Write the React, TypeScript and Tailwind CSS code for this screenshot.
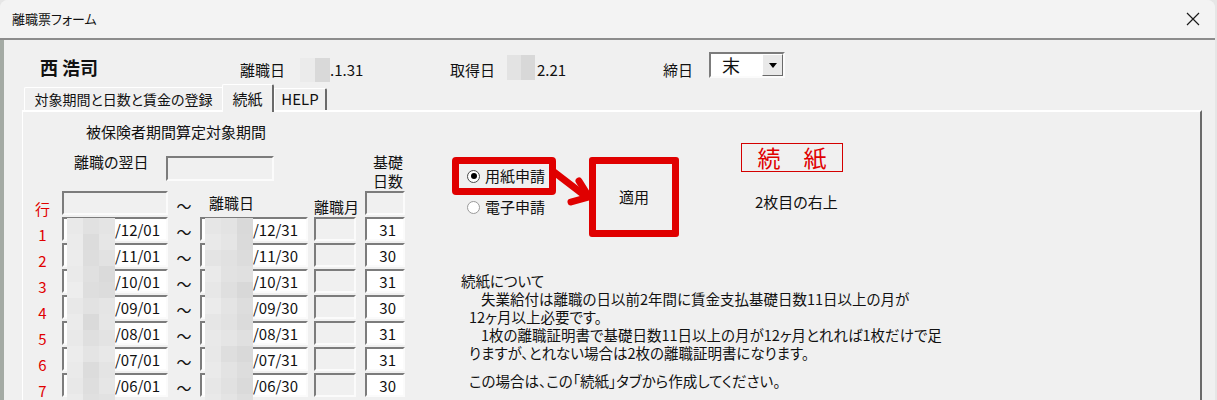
import React from "react";

// 3D sunken edit box, like the classic Windows forms control
const sunken =
  "border-2 border-t-[#7c7c7c] border-l-[#7c7c7c] border-r-[#fbfbfb] border-b-[#fbfbfb]";

const rows = [
  { no: "1", from: "/12/01", to: "/12/31", days: "31" },
  { no: "2", from: "/11/01", to: "/11/30", days: "30" },
  { no: "3", from: "/10/01", to: "/10/31", days: "31" },
  { no: "4", from: "/09/01", to: "/09/30", days: "30" },
  { no: "5", from: "/08/01", to: "/08/31", days: "31" },
  { no: "6", from: "/07/01", to: "/07/31", days: "31" },
  { no: "7", from: "/06/01", to: "/06/30", days: "30" },
];

// pixelated cover over the year part of the dates
const mosaicFrom = [
  "bg-[#e9e9e9]", "bg-[#e1e1e1]", "bg-[#e4e4e4]",
  "bg-[#ebebeb]", "bg-[#dcdcdc]", "bg-[#e6e6e6]",
  "bg-[#ececec]", "bg-[#dddddd]", "bg-[#e2e2e2]",
  "bg-[#eaeaea]", "bg-[#e0e0e0]", "bg-[#dadada]",
  "bg-[#ededed]", "bg-[#dedede]", "bg-[#dcdcdc]",
  "bg-[#e8e8e8]", "bg-[#e2e2e2]", "bg-[#e5e5e5]",
  "bg-[#ebebeb]", "bg-[#dadada]", "bg-[#e6e6e6]",
  "bg-[#e9e9e9]", "bg-[#dfdfdf]", "bg-[#e3e3e3]",
  "bg-[#ececec]", "bg-[#e4e4e4]", "bg-[#e8e8e8]",
  "bg-[#eaeaea]", "bg-[#dcdcdc]", "bg-[#e4e4e4]",
  "bg-[#e8e8e8]", "bg-[#dedede]", "bg-[#e6e6e6]",
  "bg-[#ebebeb]", "bg-[#e0e0e0]", "bg-[#e2e2e2]",
];

const mosaicTo = [
  "bg-[#e6e6e6]", "bg-[#e3e3e3]", "bg-[#d9d9d9]",
  "bg-[#e9e9e9]", "bg-[#e5e5e5]", "bg-[#dadada]",
  "bg-[#e4e4e4]", "bg-[#e1e1e1]", "bg-[#dcdcdc]",
  "bg-[#eaeaea]", "bg-[#e2e2e2]", "bg-[#e0e0e0]",
  "bg-[#e7e7e7]", "bg-[#dfdfdf]", "bg-[#d8d8d8]",
  "bg-[#ebebeb]", "bg-[#e4e4e4]", "bg-[#dddddd]",
  "bg-[#e6e6e6]", "bg-[#e2e2e2]", "bg-[#dbdbdb]",
  "bg-[#e9e9e9]", "bg-[#e5e5e5]", "bg-[#e0e0e0]",
  "bg-[#e8e8e8]", "bg-[#dedede]", "bg-[#d9d9d9]",
  "bg-[#eaeaea]", "bg-[#e3e3e3]", "bg-[#dddddd]",
  "bg-[#e7e7e7]", "bg-[#e1e1e1]", "bg-[#dadada]",
  "bg-[#e9e9e9]", "bg-[#e4e4e4]", "bg-[#dedede]",
];

function Mosaic({ cells, className }: { cells: string[]; className: string }) {
  return (
    <div className={`absolute top-[27px] w-[48px] grid grid-cols-3 auto-rows-[16px] ${className}`}>
      {cells.map((c, i) => (
        <div key={i} className={c} />
      ))}
    </div>
  );
}

function Radio({ checked }: { checked?: boolean }) {
  return (
    <span
      className={`w-[13px] h-[13px] rounded-full bg-white border flex items-center justify-center ${
        checked ? "border-[#4a4a4a]" : "border-[#9a9a9a]"
      }`}
    >
      {checked && <span className="w-[6px] h-[6px] rounded-full bg-black" />}
    </span>
  );
}

const App = () => {
  return (
    <div className="w-[1217px] h-[400px] overflow-hidden bg-[#e6e6e6] font-['Noto_Sans_CJK_JP',sans-serif] [font-feature-settings:'palt'] text-[#111]">
      <div className="w-[1215px] h-[400px] rounded-t-[8px] bg-[#f0f0f0] overflow-hidden">
        {/* title bar */}
        <div className="h-[40px] bg-[#f3f3f3] border-b-2 border-[#8c8c8c] flex items-center justify-between pl-[12px] pr-[14px]">
          <span className="text-[13px]">離職票フォーム</span>
          <svg width="14" height="14" viewBox="0 0 14 14" className="mr-[1px]">
            <path d="M1 1 L13 13 M13 1 L1 13" stroke="#1a1a1a" strokeWidth="1.2" />
          </svg>
        </div>

        <div className="border-l-[4px] border-[#a4aaa4] h-[360px]">
          {/* header: name, dates, closing day */}
          <div className="h-[45px] flex items-start text-[15px] leading-[20px]">
            <div className="w-[236px] pl-[36px] mt-[15px] text-[18px] leading-[24px] font-bold">西 浩司</div>
            <div className="w-[210px] flex items-start">
              <span className="w-[60px] mt-[20px]">離職日</span>
              <span className="flex mt-[18px] h-[24px]">
                <span className="w-[15px] bg-[#ebebeb]" />
                <span className="w-[15px] bg-[#d9d9d9]" />
              </span>
              <span className="mt-[20px]">.1.31</span>
            </div>
            <div className="w-[213px] flex items-start">
              <span className="w-[57px] mt-[20px]">取得日</span>
              <span className="flex mt-[15px] h-[25px]">
                <span className="w-[14px] bg-[#e3e3e3]" />
                <span className="w-[14px] bg-[#d8d8d8]" />
              </span>
              <span className="mt-[20px] ml-[2px]">2.21</span>
            </div>
            <span className="w-[46px] mt-[20px]">締日</span>
            <div className={`mt-[12px] w-[76px] h-[26px] bg-white flex items-center justify-between ${sunken}`}>
              <span className="pl-[11px] text-[18px] leading-[22px]">末</span>
              <span className="w-[21px] h-[22px] bg-[#e9e9e9] border border-t-white border-l-white border-r-[#6a6a6a] border-b-[#6a6a6a] flex items-center justify-center">
                <svg width="8" height="5" viewBox="0 0 8 5">
                  <path d="M0 0 H8 L4 5 Z" fill="#000" />
                </svg>
              </span>
            </div>
          </div>

          {/* tab strip */}
          <div className="h-[25px] flex items-end pl-[20px] text-[14px]">
            <div className="w-[198px] h-[23px] border-t border-l border-white rounded-tl-[2px] flex items-center justify-center">
              対象期間と日数と賃金の登録
            </div>
            <div className="relative z-10 -mb-[2px] w-[52px] h-[28px] bg-[#f0f0f0] border-t border-l border-white border-r-2 border-r-[#6a6a6a] rounded-t-[2px] flex items-start justify-center pt-[3px] text-[15px]">
              続紙
            </div>
            <div className="w-[53px] h-[22px] border-t border-l border-white border-r-2 border-r-[#6a6a6a] rounded-tr-[2px] flex items-center justify-center text-[15px]">
              HELP
            </div>
          </div>

          {/* tab page */}
          <div className="ml-[18px] w-[1180px] h-[300px] border-t-2 border-l border-white border-r-2 border-r-[#6a6a6a] flex text-[15px] leading-[20px]">
            {/* period table */}
            <div className="w-[429px] shrink-0">
              <div className="mt-[10px] pl-[63px]">被保険者期間算定対象期間</div>
              <div className="mt-[8px] h-[41px] flex items-start">
                <span className="w-[143px] pl-[51px] mt-[2px]">離職の翌日</span>
                <span className={`w-[108px] h-[25px] mt-[6px] ${sunken}`} />
                <span className="ml-[99px] mt-[2px] leading-[19px]">
                  基礎
                  <br />
                  日数
                </span>
              </div>

              <div className="relative grid grid-cols-[39px_106px_32px_108px_6px_42px_9px_40px] auto-rows-[24px] gap-y-[2px]">
                <span className="flex items-end justify-center leading-[16px] translate-y-[2px] text-[#e00000]">行</span>
                <span className={sunken} />
                <span className="flex items-center justify-center translate-y-[3px]">～</span>
                <span className="pl-[9px] flex items-center">離職日</span>
                <span />
                <span className="flex items-end leading-[16px] whitespace-nowrap">離職月</span>
                <span />
                <span className={sunken} />

                {rows.map((r) => (
                  <React.Fragment key={r.no}>
                    <span className="flex items-end justify-center leading-[16px] translate-y-[2px] text-[#e00000]">
                      {r.no}
                    </span>
                    <span className={`bg-white text-right pr-[6px] pt-[1px] ${sunken}`}>{r.from}</span>
                    <span className="flex items-center justify-center translate-y-[3px]">～</span>
                    <span className={`bg-white text-right pr-[8px] pt-[1px] ${sunken}`}>{r.to}</span>
                    <span />
                    <span className={sunken} />
                    <span />
                    <span className={`bg-white text-right pr-[7px] pt-[1px] ${sunken}`}>{r.days}</span>
                  </React.Fragment>
                ))}

                <Mosaic cells={mosaicFrom} className="left-[44px]" />
                <Mosaic cells={mosaicTo} className="left-[182px]" />
              </div>
            </div>

            {/* continuation sheet options */}
            <div className="pt-[31px]">
              <div className="relative flex items-start">
                <div className="mt-[14px] w-[104px]">
                  <div className="h-[38px] border-[7px] border-[#e00000] rounded-[4px] flex items-center pl-[8px] gap-[5px]">
                    <Radio checked />
                    <span>用紙申請</span>
                  </div>
                  <div className="mt-[2px] h-[20px] flex items-center pl-[15px] gap-[5px]">
                    <Radio />
                    <span>電子申請</span>
                  </div>
                </div>

                <div className="ml-[33px] mt-[14px] w-[90px] h-[80px] border-[7px] border-[#e00000] rounded-[3px] flex items-center justify-center">
                  適用
                </div>

                <div className="ml-[62px]">
                  <div className="w-[102px] h-[29px] border border-[#d40000] flex items-center justify-center text-[23px] text-[#e00000] leading-none">
                    続　紙
                  </div>
                  <div className="mt-[20px] pl-[14px]">2枚目の右上</div>
                </div>

                <svg width="46" height="42" viewBox="0 0 46 42" className="absolute left-[98px] top-[22px]">
                  <path d="M4 7 L34 30" stroke="#e00000" strokeWidth="7" strokeLinecap="round" />
                  <path d="M29 16 L39 32 L21 37" fill="none" stroke="#e00000" strokeWidth="7" strokeLinecap="round" strokeLinejoin="round" />
                </svg>
              </div>

              <div className="mt-[35px] ml-[9px] text-[14.5px] leading-[18px] whitespace-nowrap">
                <div>続紙について</div>
                <div className="pl-[20px]">失業給付は離職の日以前2年間に賃金支払基礎日数11日以上の月が</div>
                <div className="pl-[8px]">12ヶ月以上必要です。</div>
                <div className="pl-[20px]">1枚の離職証明書で基礎日数11日以上の月が12ヶ月とれれば1枚だけで足</div>
                <div className="pl-[8px]">りますが、とれない場合は2枚の離職証明書になります。</div>
                <div className="pl-[8px] mt-[10px]">この場合は、この「続紙」タブから作成してください。</div>
              </div>
            </div>
          </div>
        </div>
      </div>
    </div>
  );
};

export default App;
